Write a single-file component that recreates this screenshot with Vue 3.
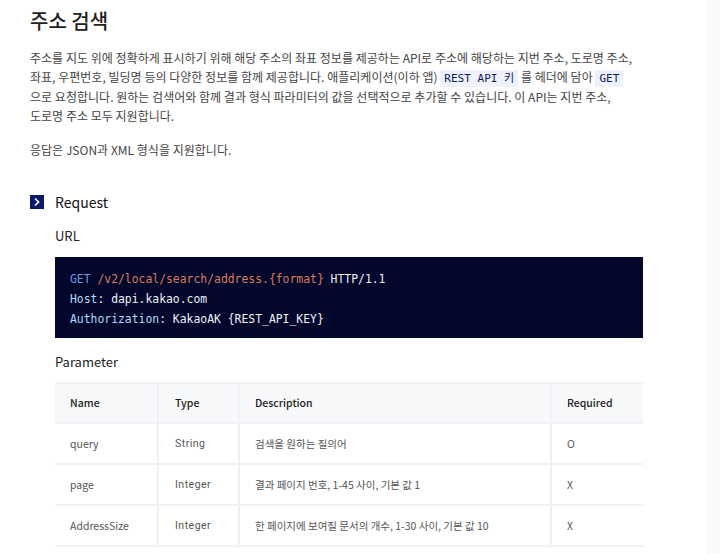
<script setup>
const rows = [
  { name: 'query', type: 'String', desc: '검색을 원하는 질의어', req: 'O' },
  { name: 'page', type: 'Integer', desc: '결과 페이지 번호, 1-45 사이, 기본 값 1', req: 'X' },
  { name: 'AddressSize', type: 'Integer', desc: '한 페이지에 보여질 문서의 개수, 1-30 사이, 기본 값 10', req: 'X' },
]
</script>

<template>
  <div class="page">
    <main class="main">
      <h1 class="title">주소 검색</h1>
      <p class="para">
        주소를 지도 위에 정확하게 표시하기 위해 해당 주소의 좌표 정보를 제공하는 API로 주소에 해당하는 지번 주소, 도로명 주소,<br />
        좌표, 우편번호, 빌딩명 등의 다양한 정보를 함께 제공합니다. 애플리케이션(이하 앱) <code class="inline">REST API 키</code> 를 헤더에 담아 <code class="inline">GET</code><br />
        으로 요청합니다. 원하는 검색어와 함께 결과 형식 파라미터의 값을 선택적으로 추가할 수 있습니다. 이 API는 지번 주소,<br />
        도로명 주소 모두 지원합니다.
      </p>
      <p class="para second">응답은 JSON과 XML 형식을 지원합니다.</p>

      <h2 class="section">
        <span class="chev">
          <svg width="14" height="14" viewBox="0 0 14 14"><path d="M5 3.5 8.6 7 5 10.5" fill="none" stroke="#fff" stroke-width="1.6" /></svg>
        </span>
        Request
      </h2>

      <div class="inner">
        <h3 class="sub">URL</h3>
        <pre class="code"><span class="kw">GET</span> <span class="url">/v2/local/search/address.{format}</span> HTTP/1.1
<span class="hd">Host</span>: dapi.kakao.com
<span class="hd">Authorization</span>: KakaoAK {REST_API_KEY}</pre>
        <h3 class="sub param">Parameter</h3>
        <table class="table">
          <thead>
            <tr>
              <th class="c1">Name</th>
              <th class="c2">Type</th>
              <th class="c3">Description</th>
              <th class="c4">Required</th>
            </tr>
          </thead>
          <tbody>
            <tr v-for="r in rows" :key="r.name">
              <td>{{ r.name }}</td>
              <td class="mono">{{ r.type }}</td>
              <td>{{ r.desc }}</td>
              <td>{{ r.req }}</td>
            </tr>
          </tbody>
        </table>
      </div>
    </main>
    <aside class="side"></aside>
  </div>
</template>

<style>
html, body { margin: 0; background: #fff; overflow: hidden; }
</style>

<style scoped>
.page {
  display: flex;
  width: 720px;
  height: 554px;
  overflow: hidden;
  font-family: "Noto Sans CJK KR", "Noto Sans", sans-serif;
  color: #333;
}
.main { width: 706px; flex: none; padding: 6px 0 0 30px; box-sizing: border-box; }
.side { flex: 1; background: #f9fafb; }
.title { margin: 0; font-size: 20px; font-weight: 500; line-height: 30px; color: #222; }
.para { margin: 12px 0 0; font-size: 12px; line-height: 19.33px; letter-spacing: 0.02px; white-space: nowrap; color: #444; }
.second { margin-top: 15px; }
.inline {
  font-family: "DejaVu Sans Mono", "Noto Sans CJK KR", monospace;
  font-size: 11px;
  line-height: 1;
  color: #0a1a5c;
  background: #edf1fb;
  padding: 2px 4px;
}
.section {
  display: flex;
  align-items: center;
  gap: 11px;
  margin: 32px 0 0;
  font-size: 14px;
  font-weight: 400;
  line-height: 20px;
  color: #111;
}
.chev {
  width: 14px;
  height: 14px;
  flex: none;
  background: #0b1a66;
  display: flex;
}
.inner { margin-left: 25px; width: 588px; }
.sub { margin: 14px 0 0; font-size: 13px; font-weight: 400; line-height: 20px; color: #222; }
.code {
  margin: 11px 0 0;
  height: 81px;
  box-sizing: border-box;
  padding: 12px 15px;
  background: #02072b;
  color: #eef1f8;
  font-family: "DejaVu Sans Mono", monospace;
  font-size: 11.4px;
  line-height: 20px;
}
.kw { color: #6a9be0; }
.url { color: #dc7a60; }
.hd { color: #afdcfb; }
.param { margin-top: 14px; }
.table {
  margin-top: 10px;
  width: 588px;
  border-collapse: collapse;
  table-layout: fixed;
  font-size: 10.5px;
  border-top: 2px solid #f1f2f5;
}
th, td {
  text-align: left;
  padding: 0 15px;
  height: 41px;
  box-sizing: border-box;
  border-bottom: 2px solid #f1f2f5;
  border-right: 2px solid #eef0f4;
  white-space: nowrap;
}
th:last-child, td:last-child { border-right: 0; }
th { height: 40px; background: #f7f8fa; font-weight: 500; color: #222; }
td { color: #555; }
.c1 { width: 103px; }
.c2 { width: 81px; padding-left: 16px; }
.c3 { width: 312px; }
.mono { font-family: Roboto, sans-serif; font-size: 10.5px; letter-spacing: 0.5px; padding-left: 16px; }
</style>
